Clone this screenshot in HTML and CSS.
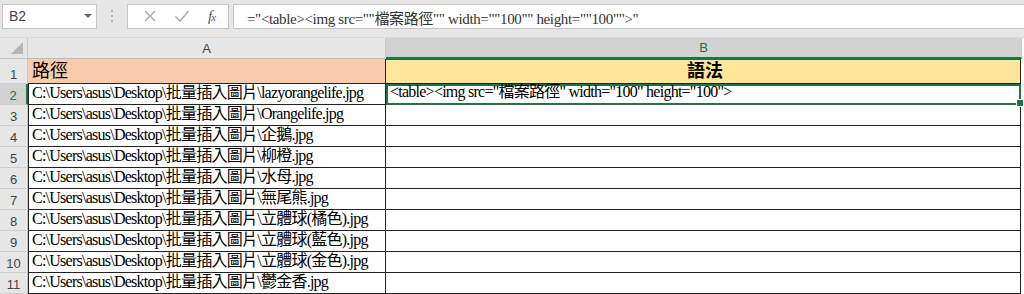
FILE: index.html
```html
<!DOCTYPE html>
<html lang="zh-Hant">
<head>
    <meta charset="UTF-8">
    <title>Excel 語法</title>
    <link rel="stylesheet" href="styles.css">
</head>
<body>
    <div class="toolbar">
        <div class="name-box">
            <span>B2</span>
            <span class="drop-arrow"></span>
        </div>
        <div class="grip"><i></i><i></i><i></i></div>
        <div class="fx-buttons">
            <svg class="btn-icon" width="14" height="14" viewBox="0 0 14 14"><path d="M2 2 L12 12 M12 2 L2 12" stroke="#a6a6a6" stroke-width="1.3" fill="none"/></svg>
            <svg class="btn-icon" width="16" height="14" viewBox="0 0 16 14"><path d="M1.5 7.5 L6 12 L14.5 2" stroke="#a6a6a6" stroke-width="1.3" fill="none"/></svg>
            <span class="fx">f<small>x</small></span>
        </div>
        <div class="formula">="&lt;table&gt;&lt;img src=""檔案路徑"" width=""100"" height=""100""&gt;"</div>
    </div>

    <div class="sheet">
        <div class="corner"><span class="tri"></span></div>
        <div class="col-head">A</div>
        <div class="col-head active">B</div>

        <div class="row-head">1</div>
        <div class="cell title-a">路徑</div>
        <div class="cell title-b">語法</div>

        <div class="row-head active">2</div>
        <div class="cell a">C:\Users\asus\Desktop\批量插入圖片\lazyorangelife.jpg</div>
        <div class="cell b selected">&lt;table&gt;&lt;img src="檔案路徑" width="100" height="100"&gt;<span class="handle"></span></div>

        <div class="row-head">3</div>
        <div class="cell a">C:\Users\asus\Desktop\批量插入圖片\Orangelife.jpg</div>
        <div class="cell b"></div>

        <div class="row-head">4</div>
        <div class="cell a">C:\Users\asus\Desktop\批量插入圖片\企鵝.jpg</div>
        <div class="cell b"></div>

        <div class="row-head">5</div>
        <div class="cell a">C:\Users\asus\Desktop\批量插入圖片\柳橙.jpg</div>
        <div class="cell b"></div>

        <div class="row-head">6</div>
        <div class="cell a">C:\Users\asus\Desktop\批量插入圖片\水母.jpg</div>
        <div class="cell b"></div>

        <div class="row-head">7</div>
        <div class="cell a">C:\Users\asus\Desktop\批量插入圖片\無尾熊.jpg</div>
        <div class="cell b"></div>

        <div class="row-head">8</div>
        <div class="cell a">C:\Users\asus\Desktop\批量插入圖片\立體球(橘色).jpg</div>
        <div class="cell b"></div>

        <div class="row-head">9</div>
        <div class="cell a">C:\Users\asus\Desktop\批量插入圖片\立體球(藍色).jpg</div>
        <div class="cell b"></div>

        <div class="row-head">10</div>
        <div class="cell a">C:\Users\asus\Desktop\批量插入圖片\立體球(金色).jpg</div>
        <div class="cell b"></div>

        <div class="row-head">11</div>
        <div class="cell a">C:\Users\asus\Desktop\批量插入圖片\鬱金香.jpg</div>
        <div class="cell b"></div>
    </div>
</body>
</html>
```

FILE: styles.css
```css
body {
    margin: 0;
    background: #ffffff;
    font-family: 'Liberation Serif', 'Noto Sans CJK TC', serif;
    overflow: hidden;
}

/* formula bar */
.toolbar {
    display: flex;
    align-items: center;
    height: 38px;
    background: #e6e6e6;
    padding: 0 0 5px 2px;
    box-sizing: border-box;
    border-bottom: 1px solid #d9d9d9;
}

.name-box {
    width: 95px;
    height: 25px;
    box-sizing: border-box;
    background: white;
    border: 1px solid #c6c6c6;
    display: flex;
    align-items: center;
    justify-content: space-between;
    padding: 0 4px 0 6px;
    font-family: 'Liberation Sans', sans-serif;
    font-size: 14px;
    color: #444;
}

.drop-arrow {
    width: 0;
    height: 0;
    border-left: 4px solid transparent;
    border-right: 4px solid transparent;
    border-top: 4px solid #666;
}

.grip {
    width: 30px;
    display: flex;
    flex-direction: column;
    align-items: center;
    gap: 3px;
}

.grip i {
    width: 2px;
    height: 2px;
    background: #b3b3b3;
}

.fx-buttons {
    width: 102px;
    height: 25px;
    box-sizing: border-box;
    background: white;
    border: 1px solid #c6c6c6;
    display: flex;
    align-items: center;
    justify-content: space-around;
    padding: 0 4px 0 6px;
}

.fx {
    font-family: 'Liberation Serif', serif;
    font-style: italic;
    font-size: 15px;
    color: #555;
    letter-spacing: -1px;
}

.fx small {
    font-size: 11px;
}

.formula {
    flex: 1;
    height: 25px;
    box-sizing: border-box;
    margin-left: 4px;
    background: white;
    border: 1px solid #c6c6c6;
    border-right: none;
    padding: 2px 0 0 13px;
    font-size: 15px;
    letter-spacing: -0.35px;
    color: #333;
    white-space: nowrap;
}

/* grid */
.sheet {
    display: grid;
    grid-template-columns: 28px 358px 636px;
    grid-template-rows: 21px 25px repeat(10, 21px);
}

.corner {
    background: #e6e6e6;
    border-right: 1px solid #c8c8c8;
    border-bottom: 1px solid #c8c8c8;
    position: relative;
}

.tri {
    position: absolute;
    right: 4px;
    bottom: 4px;
    width: 0;
    height: 0;
    border-left: 12px solid transparent;
    border-bottom: 12px solid #b5b5b5;
}

.col-head {
    background: #e6e6e6;
    border-right: 1px solid #c8c8c8;
    border-bottom: 1px solid #bdbdbd;
    display: flex;
    align-items: center;
    justify-content: center;
    font-family: 'Liberation Sans', sans-serif;
    font-size: 13px;
    color: #444;
}

.col-head.active {
    background: #d2d2d2;
    color: #217346;
    border-bottom: 2px solid #217346;
}

.row-head {
    background: #e6e6e6;
    border-right: 1px solid #c8c8c8;
    border-bottom: 1px solid #d0d0d0;
    display: flex;
    align-items: flex-end;
    justify-content: center;
    padding-bottom: 1px;
    font-family: 'Liberation Sans', sans-serif;
    font-size: 13px;
    color: #444;
}

.row-head.active {
    background: #d2d2d2;
    color: #217346;
    border-right: 2px solid #217346;
}

.cell {
    border-bottom: 1px solid #222;
    display: flex;
    align-items: flex-end;
    padding: 0 0 1px 4px;
    font-size: 16px;
    letter-spacing: -0.75px;
    color: #000;
    white-space: nowrap;
    overflow: hidden;
}

.cell.a {
    border-left: 1px solid #222;
    border-right: 1px solid #222;
    padding-left: 3px;
}

.cell.b {
    border-right: 1px solid #222;
    margin-right: 1px;
}

.title-a {
    background: #f8cbad;
    font-size: 18px;
    letter-spacing: 0;
    border-right: 1px solid #222;
}

.title-b {
    background: #ffe699;
    font-size: 18px;
    letter-spacing: 0;
    font-weight: bold;
    justify-content: center;
    border-top: 1px solid #217346;
    border-right: 1px solid #222;
    margin-right: 1px;
}

.cell.selected {
    border: 2px solid #217346;
    position: relative;
    overflow: visible;
    padding-left: 2px;
}

.handle {
    position: absolute;
    right: -5px;
    bottom: -4px;
    width: 6px;
    height: 6px;
    background: #217346;
    border: 1px solid white;
}
```
